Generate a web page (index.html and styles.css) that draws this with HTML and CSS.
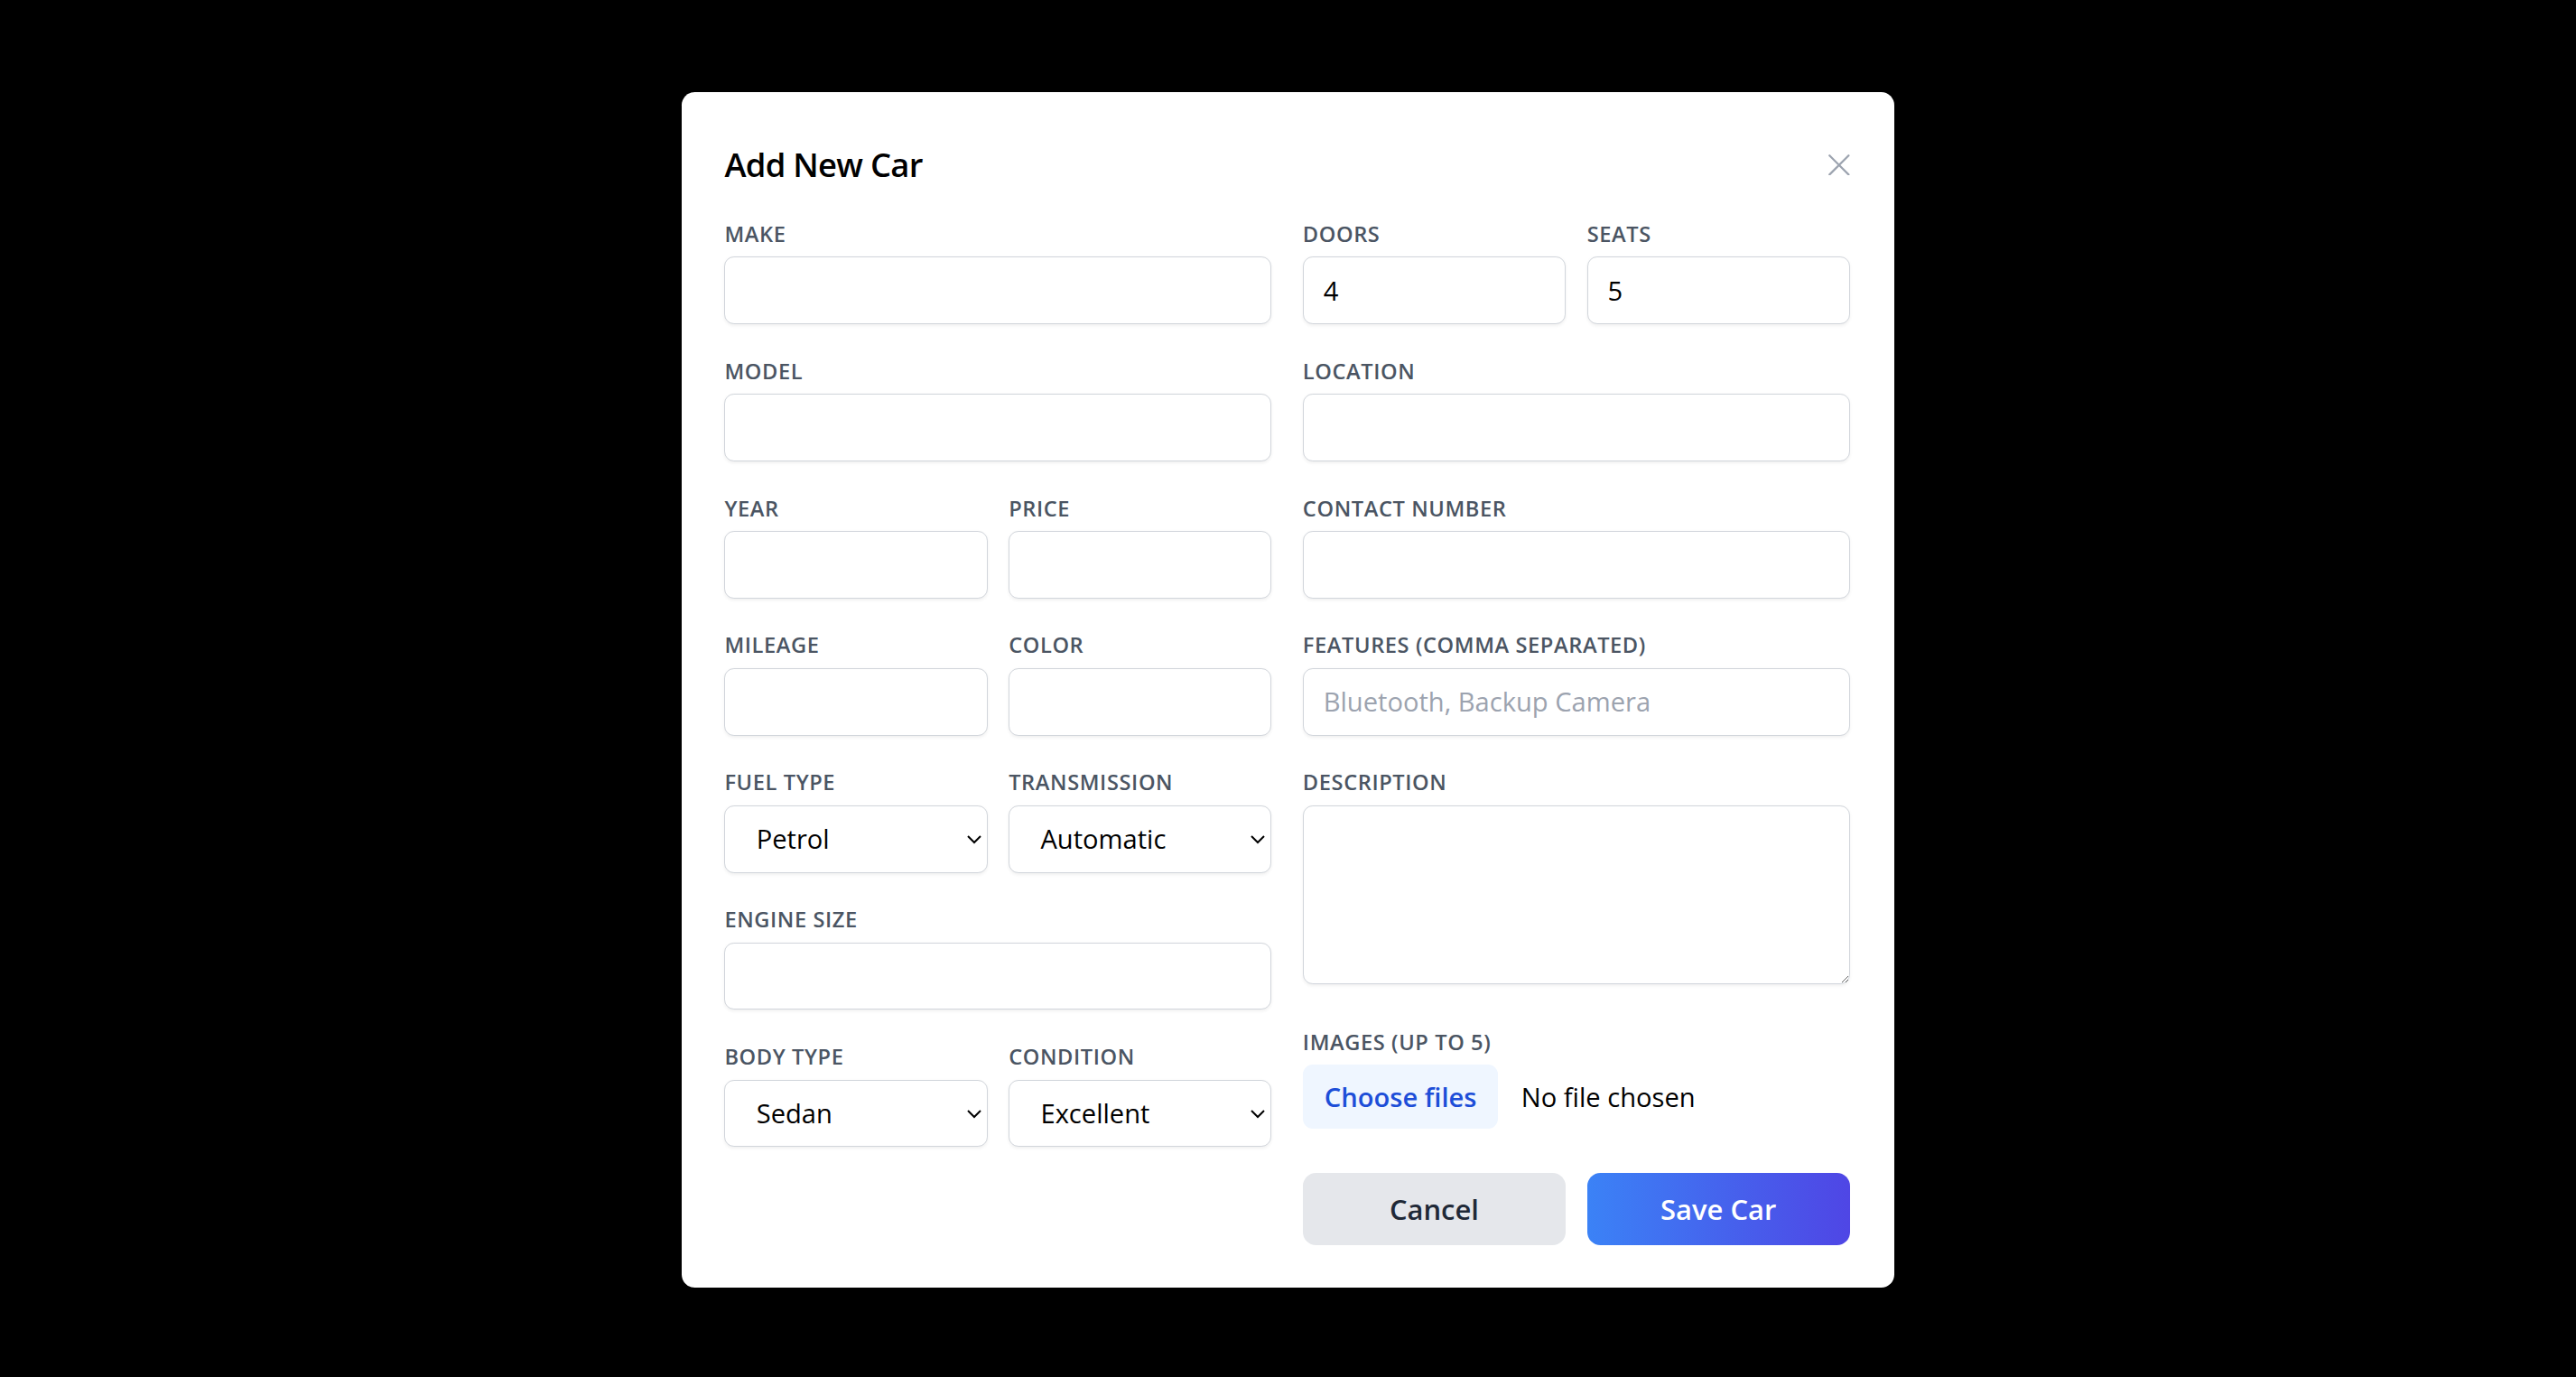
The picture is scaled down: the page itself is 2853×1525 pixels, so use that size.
FILE: index.html
```html
<!DOCTYPE html>
<html lang="en">
<head>
<meta charset="utf-8">
<title>Add New Car</title>
<link rel="stylesheet" href="styles.css">
</head>
<body>
<div class="overlay">
  <div class="modal">
    <div class="modal-header">
      <h2 class="modal-title">Add New Car</h2>
      <button class="close-btn" type="button" aria-label="Close">
        <svg width="13" height="13" viewBox="0 0 13 13" fill="none" stroke="currentColor" stroke-width="1.25" stroke-linecap="round"><path d="M0.7 0.7 12.3 12.3M12.3 0.7 0.7 12.3"/></svg>
      </button>
    </div>
    <form class="form-grid">
      <div class="col">
        <div class="field"><label class="label">Make</label><input class="control" type="text"></div>
        <div class="field"><label class="label">Model</label><input class="control" type="text"></div>
        <div class="pair">
          <div class="field"><label class="label">Year</label><input class="control" type="text"></div>
          <div class="field"><label class="label">Price</label><input class="control" type="text"></div>
        </div>
        <div class="pair">
          <div class="field"><label class="label">Mileage</label><input class="control" type="text"></div>
          <div class="field"><label class="label">Color</label><input class="control" type="text"></div>
        </div>
        <div class="pair">
          <div class="field"><label class="label">Fuel Type</label>
            <select class="control select"><option>Petrol</option><option>Diesel</option></select></div>
          <div class="field"><label class="label">Transmission</label>
            <select class="control select"><option>Automatic</option><option>Manual</option></select></div>
        </div>
        <div class="field"><label class="label">Engine Size</label><input class="control" type="text"></div>
        <div class="pair">
          <div class="field"><label class="label">Body Type</label>
            <select class="control select"><option>Sedan</option><option>SUV</option></select></div>
          <div class="field"><label class="label">Condition</label>
            <select class="control select"><option>Excellent</option><option>Good</option></select></div>
        </div>
      </div>
      <div class="col">
        <div class="pair">
          <div class="field"><label class="label">Doors</label><input class="control" type="text" value="4"></div>
          <div class="field"><label class="label">Seats</label><input class="control" type="text" value="5"></div>
        </div>
        <div class="field"><label class="label">Location</label><input class="control" type="text"></div>
        <div class="field"><label class="label">Contact Number</label><input class="control" type="text"></div>
        <div class="field"><label class="label">Features (comma separated)</label><input class="control" type="text" placeholder="Bluetooth, Backup Camera"></div>
        <div class="field"><label class="label">Description</label><textarea class="control textarea"></textarea></div>
        <div class="field field-images">
          <span class="label">Images (up to 5)</span>
          <div class="file-row">
            <label class="file-btn">Choose files<input class="file-input" type="file" multiple></label>
            <span class="file-status">No file chosen</span>
          </div>
        </div>
        <div class="actions">
          <button type="button" class="btn btn-cancel">Cancel</button>
          <button type="button" class="btn btn-save">Save Car</button>
        </div>
      </div>
    </form>
  </div>
</div>
</body>
</html>
```
FILE: styles.css
```css
html {
  zoom: 1.8195;
  background: #000;
}
body {
  margin: 0;
  background: #000;
  font-family: "Open Sans", "Noto Sans", sans-serif;
  color: #111827;
}
.overlay {
  min-height: 838px;
  display: flex;
  align-items: center;
  justify-content: center;
}
.modal {
  width: 738px;
  box-sizing: border-box;
  background: #fff;
  border-radius: 8px;
  padding: 30px 27px 26px 26px;
  margin-top: 2px;
}
.modal-header {
  display: flex;
  align-items: center;
  justify-content: space-between;
  margin-bottom: 18px;
}
.modal-title {
  margin: 0;
  font-size: 20px;
  line-height: 28px;
  font-weight: 600;
  letter-spacing: -0.02em;
  color: #000;
}
.close-btn {
  border: 0;
  background: none;
  padding: 0;
  width: 13px;
  height: 13px;
  color: #9ca3af;
  display: flex;
  cursor: pointer;
}
.form-grid {
  display: grid;
  grid-template-columns: 1fr 1fr;
  column-gap: 19px;
}
.col {
  display: flex;
  flex-direction: column;
  gap: 18.5px;
}
.pair {
  display: grid;
  grid-template-columns: 1fr 1fr;
  column-gap: 13px;
}
.field {
  display: flex;
  flex-direction: column;
  min-width: 0;
}
.label {
  font-size: 13px;
  line-height: 20px;
  font-weight: 600;
  letter-spacing: 0.025em;
  text-transform: uppercase;
  color: #4b5563;
  margin-bottom: 4px;
}
.control {
  box-sizing: border-box;
  width: 100%;
  height: 41px;
  border: 1px solid #d1d5db;
  border-radius: 6px;
  padding: 0 12px;
  font-family: inherit;
  font-size: 16px;
  line-height: 20px;
  color: #000;
  background: #fff;
  box-shadow: 0 1px 2px rgba(0, 0, 0, 0.06);
  outline: none;
}
.control::placeholder {
  color: #9ca3af;
}
.select {
  padding-left: 15px;
  padding-right: 4px;
}
.textarea {
  height: 109px;
  padding: 9px 12px;
  resize: vertical;
}
.field-images {
  margin-top: 6.5px;
}
.file-row {
  display: flex;
  align-items: center;
}
.file-btn {
  box-sizing: border-box;
  width: 119px;
  height: 39px;
  display: flex;
  align-items: center;
  justify-content: center;
  font-size: 16px;
  font-weight: 600;
  color: #1d4ed8;
  background: #eff6ff;
  border-radius: 6px;
  margin-right: 14px;
  cursor: pointer;
  white-space: nowrap;
}
.file-input {
  display: none;
}
.file-status {
  font-size: 16px;
  color: #000;
}
.actions {
  display: grid;
  grid-template-columns: 1fr 1fr;
  column-gap: 13px;
  margin-top: 8px;
}
.btn {
  height: 44px;
  border: 0;
  border-radius: 8px;
  font-family: inherit;
  font-size: 17px;
  font-weight: 600;
  cursor: pointer;
}
.btn-cancel {
  background: #e5e7eb;
  color: #1f2937;
}
.btn-save {
  background: linear-gradient(90deg, #3b82f6, #4f46e5);
  color: #fff;
}
```
